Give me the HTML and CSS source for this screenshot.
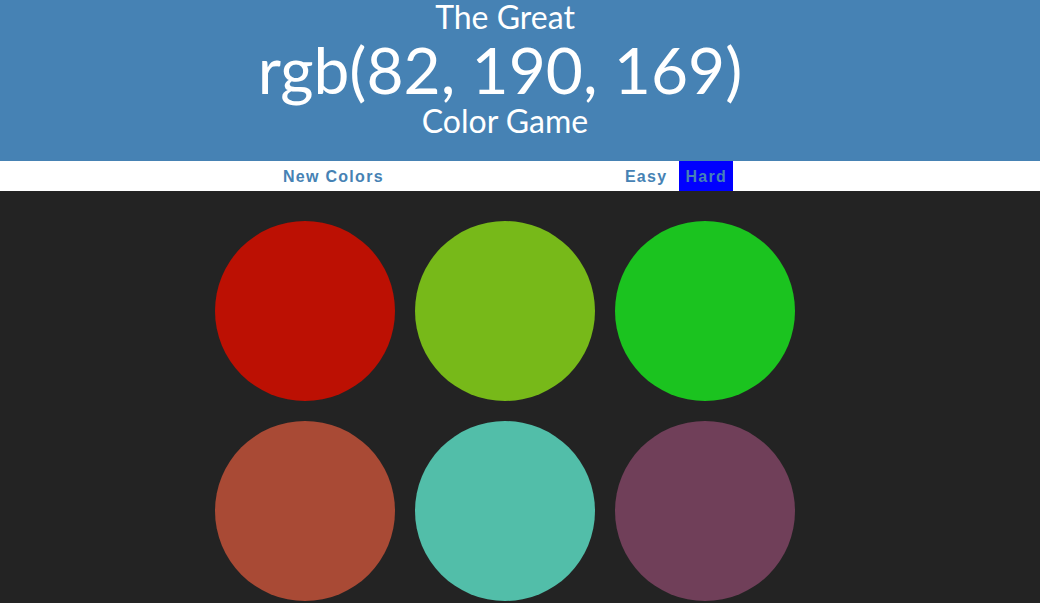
FILE: index.html
```html
<!DOCTYPE html>
<html>
<head>
<meta charset="utf-8">
<title>Color Game</title>
<link rel="stylesheet" href="styles.css">
</head>
<body>
<h1 class="title">The Great<br><span class="color-display">rgb(82, 190, 169)</span><br>Color Game</h1>
<div class="stripe">
  <button class="btn btn-new">New Colors</button>
  <span class="message"></span>
  <button class="btn">Easy</button>
  <button class="btn selected">Hard</button>
</div>
<div class="container">
  <div class="square" style="background: rgb(188, 16, 3);"></div>
  <div class="square" style="background: rgb(119, 185, 25);"></div>
  <div class="square" style="background: rgb(27, 195, 31);"></div>
  <div class="square" style="background: rgb(169, 74, 53);"></div>
  <div class="square" style="background: rgb(82, 190, 169);"></div>
  <div class="square" style="background: rgb(112, 63, 89);"></div>
</div>
</body>
</html>
```
FILE: styles.css
```css
html, body {
  margin: 0;
  padding: 0;
}
body {
  background: #232323;
  font-family: "Lato", "Open Sans", sans-serif;
}
.title {
  margin: 0;
  padding: 0 30px 0 0;
  height: 161px;
  box-sizing: border-box;
  background: #4682b4;
  color: #fff;
  font-weight: normal;
  font-size: 32px;
  line-height: 1.08;
  text-align: center;
}
.color-display {
  font-size: 200%;
  margin-left: -10px;
}
.stripe {
  height: 30px;
  background: #fff;
  display: flex;
  justify-content: center;
  padding-right: 30px;
}
.btn {
  border: none;
  background: none;
  height: 100%;
  margin: 0;
  padding: 2px 6px 0;
  font-family: "Liberation Sans", Arial, sans-serif;
  font-weight: 700;
  font-size: 16px;
  letter-spacing: 1.3px;
  color: #4682b4;
  outline: none;
}
.message {
  width: 229px;
}
.btn + .btn {
  margin-left: 6px;
}
.selected {
  background: #0000ff;
}
.container {
  width: 600px;
  margin: 20px 0 0 205px;
  display: flex;
  flex-wrap: wrap;
}
.square {
  width: 180px;
  height: 180px;
  margin: 10px;
  border-radius: 50%;
}
```
